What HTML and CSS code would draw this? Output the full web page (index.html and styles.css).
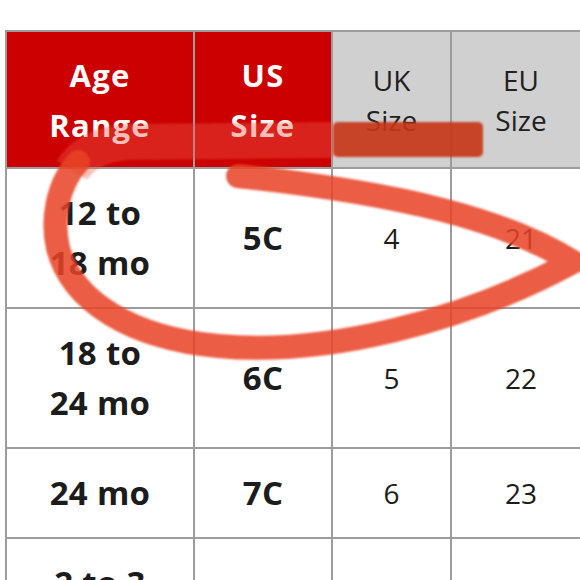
FILE: index.html
```html
<!DOCTYPE html>
<html>
<head>
<meta charset="utf-8">
<link rel="stylesheet" href="styles.css">
</head>
<body>
<div class="page">
  <div class="chart">
    <div class="cell head red">Age<br>Range</div>
    <div class="cell head red">US<br>Size</div>
    <div class="cell head gray">UK<br>Size</div>
    <div class="cell head gray">EU<br>Size</div>

    <div class="cell strong">12 to<br>18 mo</div>
    <div class="cell strong">5C</div>
    <div class="cell">4</div>
    <div class="cell">21</div>

    <div class="cell strong">18 to<br>24 mo</div>
    <div class="cell strong">6C</div>
    <div class="cell">5</div>
    <div class="cell">22</div>

    <div class="cell strong">24 mo</div>
    <div class="cell strong">7C</div>
    <div class="cell">6</div>
    <div class="cell">23</div>

    <div class="cell strong">2 to 3<br>yrs</div>
    <div class="cell strong">8C</div>
    <div class="cell">7</div>
    <div class="cell">24</div>
  </div>
  <svg class="marker" width="580" height="580" viewBox="0 0 580 580">
    <defs>
      <filter id="soft" filterUnits="userSpaceOnUse" x="0" y="0" width="580" height="580">
        <feGaussianBlur stdDeviation="0.9"/>
      </filter>
    </defs>
    <path class="bar-light" filter="url(#soft)" d="M333,140 L130,142 C100,144 82,154 72,170"/>
    <rect class="bar-dark" filter="url(#soft)" x="333" y="122" width="150" height="35" rx="5" ry="5"/>
    <path class="loop" filter="url(#soft)" d="M78,162 C56,186 52,222 58,248 C72,302 132,338 218,346 C325,356 462,322 573,262 C505,220 405,194 238,176"/>
  </svg>
</div>
</body>
</html>
```

FILE: styles.css
```css
html, body {
  margin: 0;
  padding: 0;
  background: #ffffff;
}

.page {
  position: relative;
  width: 580px;
  height: 580px;
  overflow: hidden;
  padding: 30px 0 0 5px;
  box-sizing: border-box;
}

.chart {
  display: grid;
  grid-template-columns: 186px 136px 117px 138px;
  grid-template-rows: 135px 138px 138px 88px 138px;
  gap: 2px;
  padding: 2px;
  background: #9c9c9c;
  width: max-content;
  font-family: "Open Sans", "Noto Sans", sans-serif;
}

.cell {
  background: #ffffff;
  display: flex;
  align-items: center;
  justify-content: center;
  text-align: center;
  line-height: 50px;
  font-size: 28px;
  color: #1c1c1c;
}

.strong {
  font-weight: 700;
  font-size: 33px;
  letter-spacing: 0.3px;
}

.head {
  font-size: 28px;
}

.red {
  background: #cc0000;
  color: #ffffff;
  font-weight: 700;
  font-size: 31px;
  letter-spacing: 1.2px;
}

.gray {
  background: #d0d0d0;
  color: #202020;
  line-height: 40px;
}

.marker {
  position: absolute;
  left: 0;
  top: 0;
  pointer-events: none;
}

.marker path {
  fill: none;
  stroke-linejoin: round;
}

.bar-light {
  stroke: rgba(236, 90, 70, 0.38);
  stroke-width: 36px;
  stroke-linecap: butt;
}

.bar-dark {
  fill: rgba(200, 52, 24, 0.9);
  stroke: none;
}

.loop {
  stroke: rgba(232, 66, 38, 0.86);
  stroke-width: 24px;
  stroke-linecap: round;
}
```
